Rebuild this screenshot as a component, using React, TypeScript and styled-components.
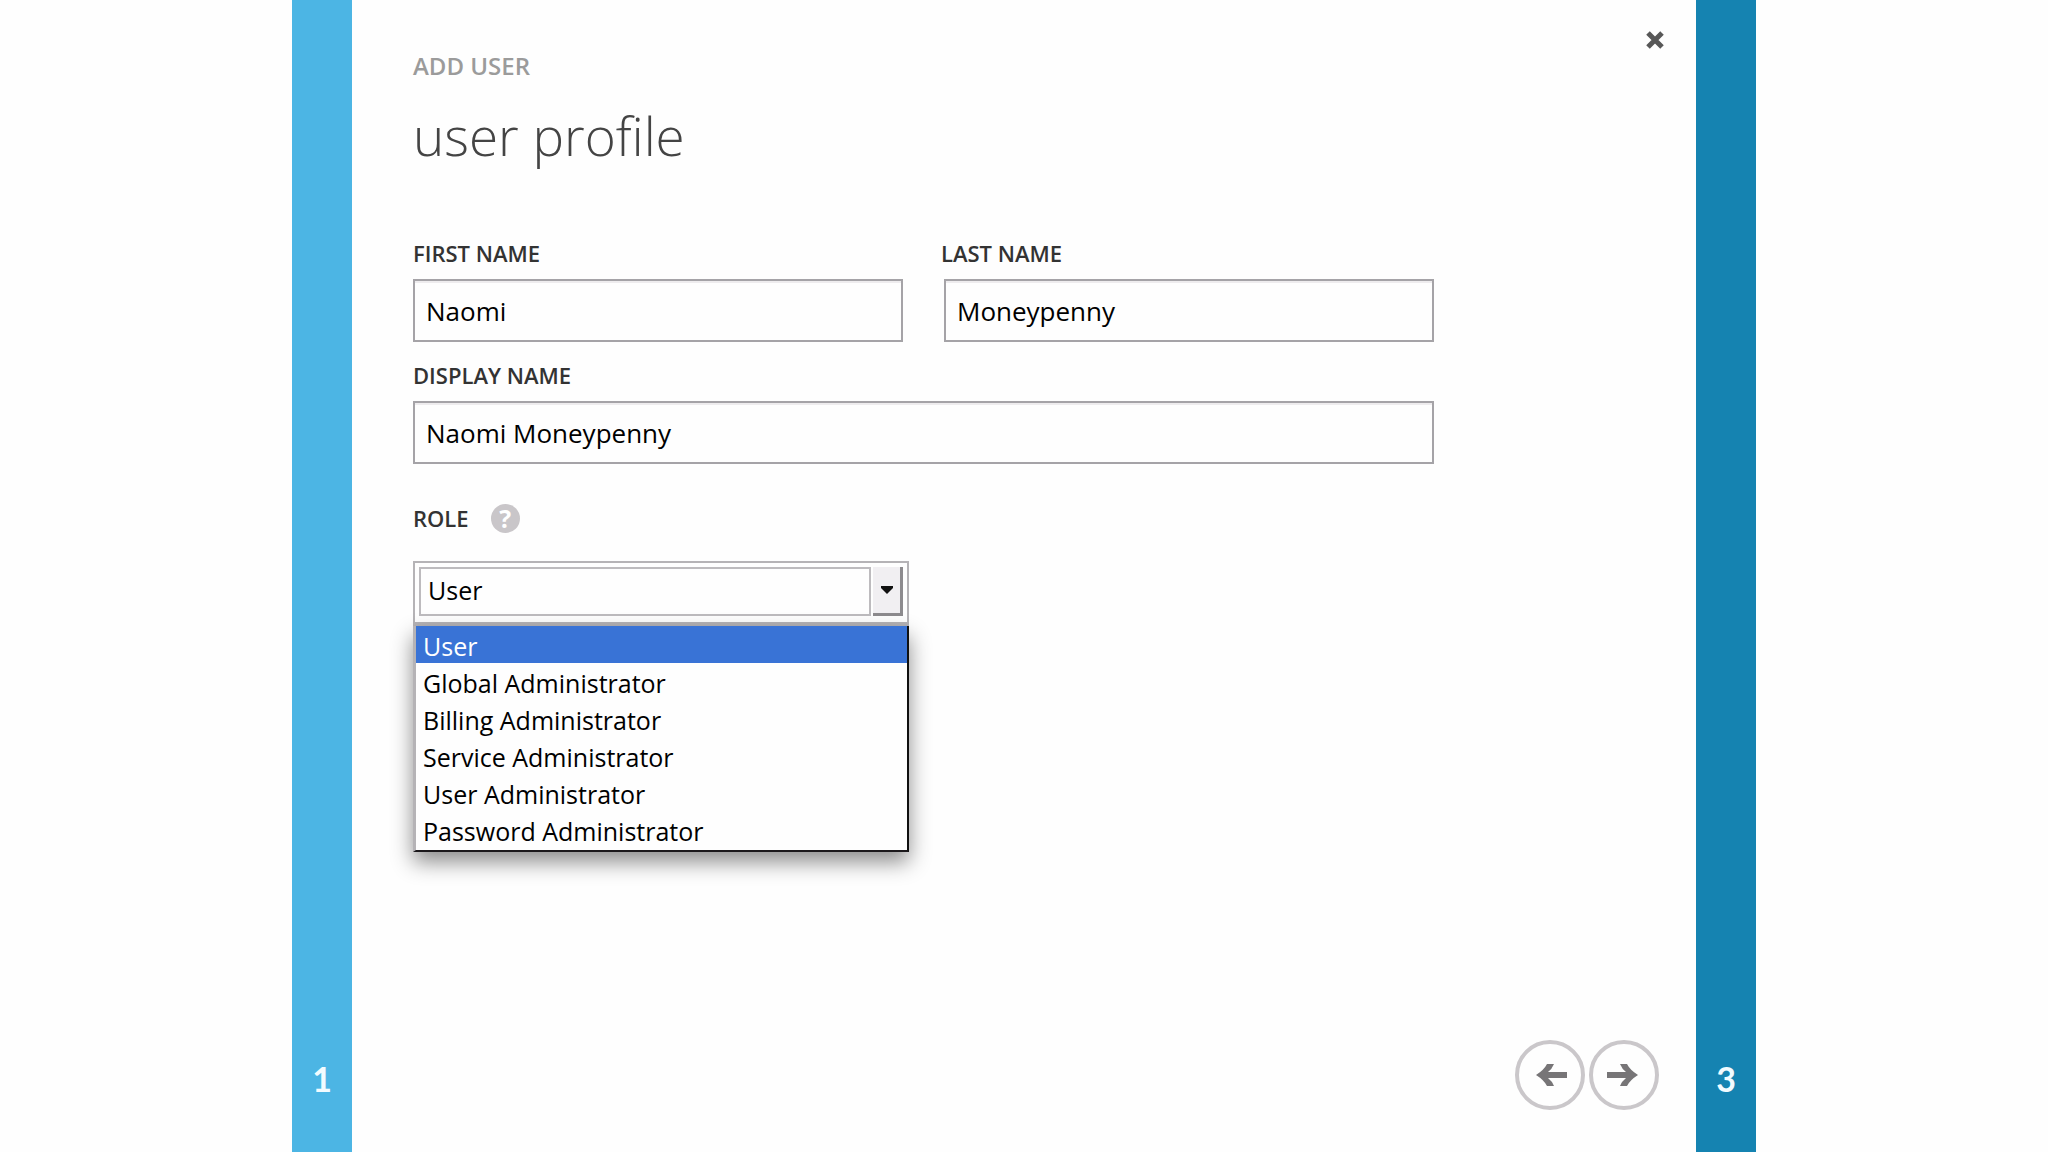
import React, { useState } from "react";
import styled, { createGlobalStyle } from "styled-components";

const GlobalStyle = createGlobalStyle`
  *, *::before, *::after { box-sizing: border-box; }
  body {
    margin: 0;
    background: #fefefe;
    color: #000;
    font-family: "Open Sans", "Noto Sans", sans-serif;
  }
`;

const Wizard = styled.main`
  display: flex;
  min-height: 100vh;
  max-width: 1464px;
  margin: 0 auto;
`;

const StepBar = styled.button<{ $color: string }>`
  display: flex;
  flex: 0 0 60px;
  align-items: flex-end;
  justify-content: center;
  padding: 0 0 49px;
  border: 0;
  background: ${(p) => p.$color};
  color: #f2fbff;
  font-family: Lato, "Open Sans", sans-serif;
  font-size: 34px;
  font-weight: 700;
  line-height: 48px;
  cursor: pointer;
`;

const Panel = styled.section`
  display: flex;
  flex: 1;
  flex-direction: column;
  min-width: 0;
  padding: 24px 37px 42px 61px;
`;

const TopRow = styled.header`
  display: flex;
  align-items: flex-start;
  justify-content: space-between;
`;

const Eyebrow = styled.p`
  margin: 0;
  padding-top: 24px;
  color: #9b9b9b;
  font-size: 24px;
  font-weight: 600;
  line-height: 36px;
`;

const CloseButton = styled.button`
  display: grid;
  place-items: center;
  width: 32px;
  height: 32px;
  margin-right: -12px;
  padding: 0;
  border: 0;
  background: none;
  cursor: pointer;
`;

const Title = styled.h1`
  margin: 10px 0 60px;
  color: #444;
  font-size: 53px;
  font-weight: 300;
  line-height: 84px;
`;

const Form = styled.form`
  display: flex;
  flex: 1;
  flex-direction: column;
`;

const Fields = styled.div`
  display: grid;
  grid-template-columns: 528px 1fr;
  row-gap: 18px;
  max-width: 1021px;
`;

const Field = styled.div<{ $wide?: boolean }>`
  display: flex;
  flex-direction: column;
  align-items: flex-start;
  gap: 11px;
  grid-column: ${(p) => (p.$wide ? "1 / -1" : "auto")};
`;

const Label = styled.label`
  color: #333;
  font-size: 22px;
  font-weight: 600;
  line-height: 30px;
`;

const TextInput = styled.input<{ $wide?: boolean }>`
  align-self: ${(p) => (p.$wide ? "stretch" : "auto")};
  width: ${(p) => (p.$wide ? "auto" : "490px")};
  height: 63px;
  padding: 0 11px;
  border: 2px solid #a5a3a7;
  border-radius: 0;
  background: #fefefe;
  box-shadow: inset 0 2px 0 #eeecee;
  color: #000;
  font-family: inherit;
  font-size: 26px;
  outline: 0;
`;

const LastField = styled(Field)`
  ${TextInput} {
    align-self: flex-end;
  }
`;

const RoleHeading = styled.div`
  display: flex;
  align-items: center;
  gap: 22px;
  margin: 39px 0 28px;
`;

const HelpButton = styled.button`
  width: 29px;
  height: 29px;
  padding: 0;
  border: 0;
  border-radius: 50%;
  background: #c9c6c9;
  color: #fff;
  font-family: inherit;
  font-size: 25px;
  font-weight: 700;
  line-height: 29px;
  cursor: pointer;
`;

const Combo = styled.div`
  position: relative;
  display: flex;
  gap: 2px;
  width: 496px;
  height: 66px;
  padding: 4px 4px 6px;
  border: 2px solid #b5b3b6;
  border-bottom-width: 5px;
`;

const RoleSelect = styled.select`
  flex: 1;
  min-width: 0;
  padding: 0 0 3px 7px;
  border: 2px solid #bdbbbe;
  border-radius: 0;
  background: #fefefe;
  color: #000;
  font-family: inherit;
  font-size: 25px;
  line-height: 36px;
  appearance: none;
  outline: 0;
`;

const ArrowButton = styled.button`
  display: grid;
  place-items: center;
  width: 30px;
  padding: 0;
  border: 0 solid #8d8b8e;
  border-width: 0 3px 3px 0;
  background: #f1eff2;
  cursor: pointer;
`;

const Options = styled.ul`
  position: absolute;
  top: calc(100% + 4px);
  right: -2px;
  left: -2px;
  margin: 0;
  padding: 0 0 2px;
  border: solid;
  border-width: 0 2px 2px 3px;
  border-color: #b5b3b6 #111 #1b181b #b5b3b6;
  background: #fefefe;
  box-shadow: 0 10px 20px rgba(0, 0, 0, 0.45);
  list-style: none;
`;

const Option = styled.li<{ $active: boolean }>`
  padding: 3px 0 0 7px;
  background: ${(p) => (p.$active ? "#3973d6" : "transparent")};
  color: ${(p) => (p.$active ? "#fff" : "#000")};
  font-size: 25px;
  line-height: 34px;
  cursor: default;
`;

const Navigation = styled.footer`
  display: flex;
  gap: 4px;
  justify-content: flex-end;
  margin-top: auto;
`;

const RoundButton = styled.button`
  display: grid;
  place-items: center;
  width: 70px;
  height: 70px;
  padding: 0;
  border: 4px solid #cac7ca;
  border-radius: 50%;
  background: none;
  cursor: pointer;
`;

const Arrow = ({ back }: { back?: boolean }) => (
  <svg width="34" height="24" viewBox="0 0 34 24" fill="#777577" aria-hidden="true">
    <path
      d={
        back
          ? "M3 12Q11 7 14 1H21Q19 6 15 9H34V15H15Q19 18 21 23H14Q11 17 3 12Z"
          : "M31 12Q23 7 20 1H13Q15 6 19 9H0V15H19Q15 18 13 23H20Q23 17 31 12Z"
      }
    />
  </svg>
);

const roles = [
  "User",
  "Global Administrator",
  "Billing Administrator",
  "Service Administrator",
  "User Administrator",
  "Password Administrator",
];

export default function App() {
  const [role, setRole] = useState(roles[0]);
  const [open, setOpen] = useState(true);

  const choose = (name: string) => {
    setRole(name);
    setOpen(false);
  };

  return (
    <>
      <GlobalStyle />
      <Wizard>
        <StepBar type="button" $color="#4cb5e4">1</StepBar>
        <Panel>
          <TopRow>
            <Eyebrow>ADD USER</Eyebrow>
            <CloseButton type="button" aria-label="Close">
              <svg width="18" height="18" viewBox="0 0 18 18" aria-hidden="true">
                <path d="M2 2 16 16M16 2 2 16" stroke="#585858" strokeWidth="5" />
              </svg>
            </CloseButton>
          </TopRow>
          <Title>user profile</Title>
          <Form onSubmit={(e) => e.preventDefault()}>
            <Fields>
              <Field>
                <Label htmlFor="first">FIRST NAME</Label>
                <TextInput id="first" defaultValue="Naomi" />
              </Field>
              <LastField>
                <Label htmlFor="last">LAST NAME</Label>
                <TextInput id="last" defaultValue="Moneypenny" />
              </LastField>
              <Field $wide>
                <Label htmlFor="display">DISPLAY NAME</Label>
                <TextInput id="display" $wide defaultValue="Naomi Moneypenny" />
              </Field>
            </Fields>
            <RoleHeading>
              <Label htmlFor="role">ROLE</Label>
              <HelpButton type="button">?</HelpButton>
            </RoleHeading>
            <Combo>
              <RoleSelect id="role" value={role} onChange={(e) => setRole(e.target.value)}>
                {roles.map((name) => (
                  <option key={name}>{name}</option>
                ))}
              </RoleSelect>
              <ArrowButton type="button" aria-label="Show roles" onClick={() => setOpen(!open)}>
                <svg width="14" height="8" viewBox="0 0 14 8" aria-hidden="true">
                  <path d="M1 0H13V2L7 8 1 2Z" fill="#111" />
                </svg>
              </ArrowButton>
              {open && (
                <Options role="listbox" aria-label="Role">
                  {roles.map((name) => (
                    <Option
                      key={name}
                      role="option"
                      aria-selected={name === role}
                      $active={name === role}
                      onClick={() => choose(name)}
                    >
                      {name}
                    </Option>
                  ))}
                </Options>
              )}
            </Combo>
            <Navigation>
              <RoundButton type="button" aria-label="Back"><Arrow back /></RoundButton>
              <RoundButton type="submit" aria-label="Next"><Arrow /></RoundButton>
            </Navigation>
          </Form>
        </Panel>
        <StepBar type="button" $color="#1583b1">3</StepBar>
      </Wizard>
    </>
  );
}
